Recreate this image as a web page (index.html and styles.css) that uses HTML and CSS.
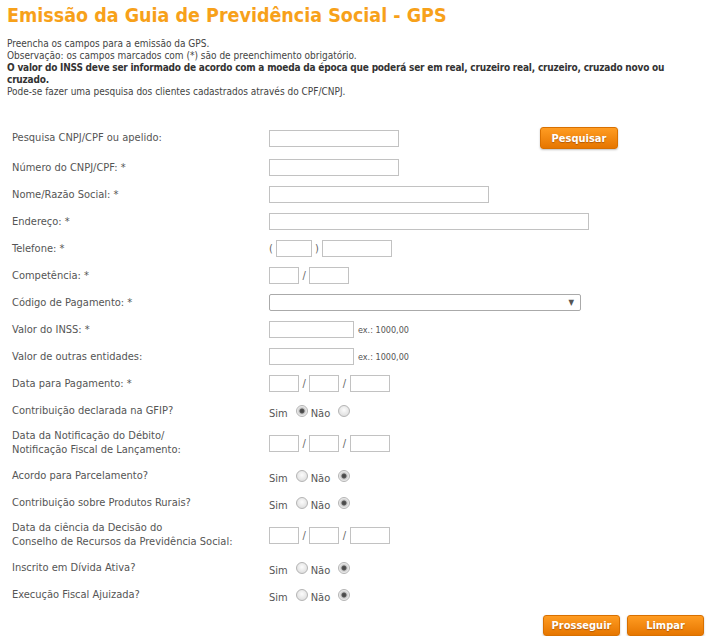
FILE: index.html
```html
<!DOCTYPE html>
<html lang="pt-BR">
<head>
  <meta charset="UTF-8" />
  <title>Emissão da Guia de Previdência Social - GPS</title>
  <link rel="stylesheet" href="styles.css">
</head>
<body>

  <h1>Emissão da Guia de Previdência Social - GPS</h1>

  <div class="intro">
    Preencha os campos para a emissão da GPS.<br/>
    Observação: os campos marcados com (*) são de preenchimento obrigatório.<br/>
    <b>O valor do INSS deve ser informado de acordo com a moeda da época que poderá ser em real, cruzeiro real, cruzeiro, cruzado novo ou cruzado.</b><br/>
    Pode-se fazer uma pesquisa dos clientes cadastrados através do CPF/CNPJ.
  </div>

  <form class="gps">
    <div class="row">
      <label>Pesquisa CNPJ/CPF ou apelido:</label>
      <div class="field">
        <input type="text" class="w130">
        <button type="button" class="btn search">Pesquisar</button>
      </div>
    </div>

    <div class="row">
      <label>Número do CNPJ/CPF: *</label>
      <div class="field"><input type="text" class="w130"></div>
    </div>

    <div class="row">
      <label>Nome/Razão Social: *</label>
      <div class="field"><input type="text" class="w220"></div>
    </div>

    <div class="row">
      <label>Endereço: *</label>
      <div class="field"><input type="text" class="w320"></div>
    </div>

    <div class="row">
      <label>Telefone: *</label>
      <div class="field phone">
        <span class="sep">(</span>
        <input type="text" class="w36">
        <span class="sep">)</span>
        <input type="text" class="w70">
      </div>
    </div>

    <div class="row">
      <label>Competência: *</label>
      <div class="field date">
        <input type="text" class="w30">
        <span class="sep">/</span>
        <input type="text" class="w40">
      </div>
    </div>

    <div class="row">
      <label>Código de Pagamento: *</label>
      <div class="field">
        <div class="select"><span class="arrow">▼</span></div>
      </div>
    </div>

    <div class="row">
      <label>Valor do INSS: *</label>
      <div class="field">
        <input type="text" class="w85">
        <span class="hint">ex.: 1000,00</span>
      </div>
    </div>

    <div class="row">
      <label>Valor de outras entidades:</label>
      <div class="field">
        <input type="text" class="w85">
        <span class="hint">ex.: 1000,00</span>
      </div>
    </div>

    <div class="row">
      <label>Data para Pagamento: *</label>
      <div class="field date">
        <input type="text" class="w30"><span class="sep">/</span>
        <input type="text" class="w30"><span class="sep">/</span>
        <input type="text" class="w40">
      </div>
    </div>

    <div class="row">
      <label>Contribuição declarada na GFIP?</label>
      <div class="field radios">
        <span>Sim</span><input type="radio" name="gfip" checked>
        <span>Não</span><input type="radio" name="gfip">
      </div>
    </div>

    <div class="row">
      <label>Data da Notificação do Débito/<br/>Notificação Fiscal de Lançamento:</label>
      <div class="field date">
        <input type="text" class="w30"><span class="sep">/</span>
        <input type="text" class="w30"><span class="sep">/</span>
        <input type="text" class="w40">
      </div>
    </div>

    <div class="row">
      <label>Acordo para Parcelamento?</label>
      <div class="field radios">
        <span>Sim</span><input type="radio" name="acordo">
        <span>Não</span><input type="radio" name="acordo" checked>
      </div>
    </div>

    <div class="row">
      <label>Contribuição sobre Produtos Rurais?</label>
      <div class="field radios">
        <span>Sim</span><input type="radio" name="rurais">
        <span>Não</span><input type="radio" name="rurais" checked>
      </div>
    </div>

    <div class="row">
      <label>Data da ciência da Decisão do<br/>Conselho de Recursos da Previdência Social:</label>
      <div class="field date">
        <input type="text" class="w30"><span class="sep">/</span>
        <input type="text" class="w30"><span class="sep">/</span>
        <input type="text" class="w40">
      </div>
    </div>

    <div class="row">
      <label>Inscrito em Dívida Ativa?</label>
      <div class="field radios">
        <span>Sim</span><input type="radio" name="divida">
        <span>Não</span><input type="radio" name="divida" checked>
      </div>
    </div>

    <div class="row">
      <label>Execução Fiscal Ajuizada?</label>
      <div class="field radios">
        <span>Sim</span><input type="radio" name="execucao">
        <span>Não</span><input type="radio" name="execucao" checked>
      </div>
    </div>

    <div class="actions">
      <button type="button" class="btn">Prosseguir</button>
      <button type="button" class="btn">Limpar</button>
    </div>
  </form>

</body>
</html>
```

FILE: styles.css
```css
body {
  margin: 0;
  padding: 0 4px 0 7px;
  background: #fff;
  font-family: 'DejaVu Sans Condensed', 'DejaVu Sans', sans-serif;
  color: #555;
}

h1 {
  margin: 0;
  padding-top: 3px;
  font-size: 19.5px;
  line-height: 26px;
  font-weight: bold;
  color: #f7a11a;
}

.intro {
  margin-top: 9px;
  font-size: 10px;
  line-height: 12px;
  color: #444;
}

.intro b {
  color: #333;
  letter-spacing: -0.2px;
}

.gps {
  margin-top: 24px;
  padding-left: 5px;
}

.row {
  display: flex;
  align-items: center;
  padding: 5px 0;
}

.row label {
  width: 257px;
  flex-shrink: 0;
  font-size: 11px;
  line-height: 14px;
}

.field {
  display: flex;
  align-items: center;
  gap: 4px;
  font-size: 11px;
}

.phone {
  gap: 3px;
}

.date {
  gap: 3.5px;
}

input[type="text"] {
  height: 17px;
  box-sizing: border-box;
  margin: 0;
  border: 1px solid #c2c2c2;
  background: #fff;
}

.w30 { width: 30px; }
.w36 { width: 36px; }
.w40 { width: 40px; }
.w70 { width: 70px; }
.w85 { width: 85px; }
.w130 { width: 130px; }
.w220 { width: 220px; }
.w320 { width: 320px; }

.sep {
  color: #666;
  font-size: 11px;
}

.hint {
  font-size: 9px;
  color: #555;
}

.select {
  width: 312px;
  height: 17px;
  box-sizing: border-box;
  border: 1px solid #aaa;
  border-radius: 2px;
  display: flex;
  justify-content: flex-end;
  align-items: center;
  padding-right: 6px;
}

.arrow {
  font-size: 8px;
  color: #555;
}

.radios {
  gap: 0;
  height: 17px;
}

.radios span {
  position: relative;
  top: 3px;
  margin-right: 8px;
}

.radios input {
  appearance: none;
  width: 12px;
  height: 12px;
  margin: 0 3px 0 0;
  border: 1px solid #b4b4b4;
  border-radius: 50%;
  background: radial-gradient(circle at 50% 40%, #fcfcfc 0%, #e2e2e2 70%, #d4d4d4 100%);
  box-sizing: border-box;
}

.radios input:checked {
  background: radial-gradient(circle, #444 0, #555 2px, #c8c8c8 3px, #f2f2f2 5px);
}

.btn {
  height: 21px;
  width: 77px;
  padding: 0;
  border: 1px solid #d87000;
  border-radius: 3px;
  background: linear-gradient(#ff9c22, #e67600);
  color: #fff;
  font-family: 'DejaVu Sans Condensed', 'DejaVu Sans', sans-serif;
  font-size: 11px;
  font-weight: bold;
  text-shadow: 0 1px 1px rgba(120, 50, 0, 0.5);
  box-shadow: 0 1px 2px rgba(0, 0, 0, 0.25);
  cursor: pointer;
}

.search {
  height: 22px;
  width: 78px;
  margin-left: 137px;
}

.actions {
  display: flex;
  justify-content: flex-end;
  gap: 7px;
  margin-top: 7px;
}
```
